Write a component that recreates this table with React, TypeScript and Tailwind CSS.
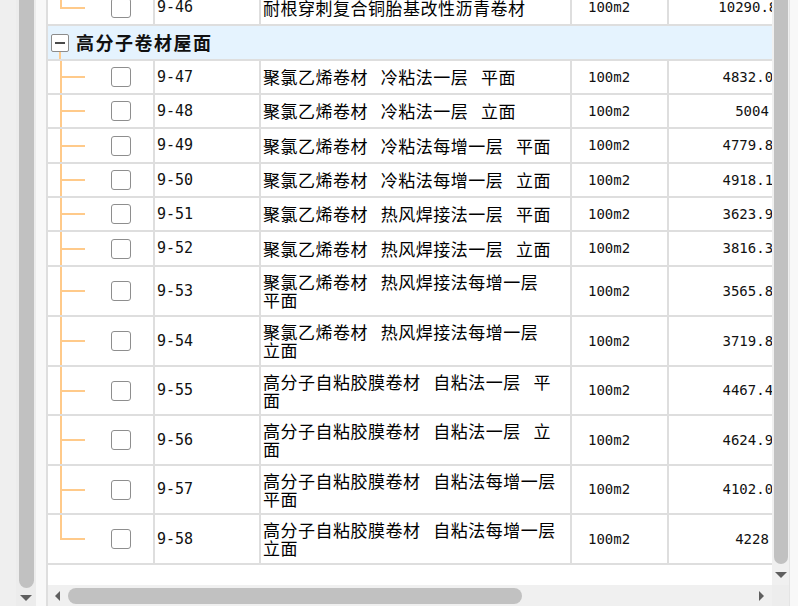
import React from 'react';

type Item = { code: string; name: string; price: string; h: number; last?: boolean };

// heights are the row pitch in the screenshot (border included)
const items: Item[] = [
  { code: '9-47', name: '聚氯乙烯卷材 冷粘法一层 平面', price: '4832.06', h: 34 },
  { code: '9-48', name: '聚氯乙烯卷材 冷粘法一层 立面', price: '5004', h: 34 },
  { code: '9-49', name: '聚氯乙烯卷材 冷粘法每增一层 平面', price: '4779.82', h: 35 },
  { code: '9-50', name: '聚氯乙烯卷材 冷粘法每增一层 立面', price: '4918.14', h: 34 },
  { code: '9-51', name: '聚氯乙烯卷材 热风焊接法一层 平面', price: '3623.95', h: 34 },
  { code: '9-52', name: '聚氯乙烯卷材 热风焊接法一层 立面', price: '3816.37', h: 35 },
  { code: '9-53', name: '聚氯乙烯卷材 热风焊接法每增一层 平面', price: '3565.84', h: 50 },
  { code: '9-54', name: '聚氯乙烯卷材 热风焊接法每增一层 立面', price: '3719.82', h: 50 },
  { code: '9-55', name: '高分子自粘胶膜卷材 自粘法一层 平面', price: '4467.45', h: 49 },
  { code: '9-56', name: '高分子自粘胶膜卷材 自粘法一层 立面', price: '4624.95', h: 50 },
  { code: '9-57', name: '高分子自粘胶膜卷材 自粘法每增一层 平面', price: '4102.06', h: 49 },
  { code: '9-58', name: '高分子自粘胶膜卷材 自粘法每增一层 立面', price: '4228', h: 50, last: true },
];

const cjk = "font-['Noto_Sans_CJK_SC',sans-serif]";
const mono = "font-['DejaVu_Sans_Mono','Noto_Sans_CJK_SC',monospace]";

function Branch({ last }: { last?: boolean }) {
  return (
    <div className="flex h-full shrink-0">
      <div className="w-[12px]" />
      <div className="flex w-[25px] flex-col">
        <div className="flex-1 border-l-2 border-[#ffca8a]" />
        <div className={'flex-1 border-t-2 border-[#ffca8a] ' + (last ? '' : 'border-l-2')} />
      </div>
    </div>
  );
}

function Row({ item }: { item: Item }) {
  return (
    <div
      className="flex shrink-0 border-b-2 border-[#dedede] text-black"
      style={{ height: item.h }}
    >
      <div className="flex w-[107px] shrink-0 items-center border-r-2 border-[#dedede]">
        <Branch last={item.last} />
        <div className="ml-[26px] h-[20px] w-[20px] rounded-[3px] border-[1.5px] border-[#8e8e8e] bg-white" />
      </div>
      <div className={'flex w-[106px] shrink-0 items-center border-r-2 border-[#dedede] pl-[2px] text-[15px] text-[#111] ' + mono}>
        {item.code}
      </div>
      <div className={'flex w-[311px] shrink-0 items-center border-r-2 border-[#dedede] pl-[2px] pr-[9px] text-[17px] leading-[18px] tracking-[0.5px] [word-spacing:8.5px] ' + cjk}>
        {item.name}
      </div>
      <div className={'flex w-[97px] shrink-0 items-center border-r-2 border-[#dedede] pl-[16px] text-[14px] text-[#111] ' + mono}>
        100m2
      </div>
      <div className={'flex w-[166px] shrink-0 items-center justify-center text-[14px] text-[#111] ' + mono}>
        {item.price}
      </div>
    </div>
  );
}

export default function App() {
  return (
    <div className="flex h-[606px] w-[798px] overflow-hidden bg-[#efefef]">
      <div className="w-[16px] shrink-0 bg-[#efefef]" />
      {/* outer scrollbar */}
      <div className="flex w-[20px] shrink-0 flex-col items-center bg-[#ececec]">
        <div className="w-[15px] flex-1 rounded-b-full bg-[#c1c1c1]" />
        <div className="mb-[5px] mt-[7px] h-0 w-0 border-l-[6px] border-r-[6px] border-t-[6px] border-l-transparent border-r-transparent border-t-[#5f5f5f]" />
      </div>
      <div className="w-[10px] shrink-0 bg-[#f8f8f8]" />

      <div className="flex w-[743px] shrink-0 flex-col border-l-2 border-[#dedede]">
        <div className="flex h-[585px] shrink-0">
          <div className="flex-1 overflow-hidden bg-white">
            <div className="-mt-[9px] flex w-[787px] flex-col">
              <Row item={{ code: '9-46', name: '耐根穿刺复合铜胎基改性沥青卷材', price: '10290.83', h: 35, last: true }} />
              <div className="flex h-[35px] shrink-0 border-b-2 border-[#dedede] bg-[#e5f3fe]">
                <div className="ml-[3px] flex w-[18px] flex-col">
                  <div className="flex-1" />
                  <div className="flex h-[18px] w-[18px] items-center justify-center rounded-[2px] border border-[#8c8c8c] bg-white">
                    <div className="h-[2px] w-[10px] bg-[#4a4a4a]" />
                  </div>
                  <div className="ml-[8px] w-[2px] flex-1 bg-[#ffca8a]" />
                </div>
                <div className={'ml-[7px] flex items-center text-[18px] font-bold tracking-[1.5px] text-[#111] ' + cjk}>
                  高分子卷材屋面
                </div>
              </div>
              {items.map((it) => (
                <Row key={it.code} item={it} />
              ))}
            </div>
          </div>
          {/* vertical scrollbar */}
          <div className="flex w-[17px] shrink-0 flex-col items-center bg-[#f0f0f0]">
            <div className="w-[14px] flex-1 rounded-b-full bg-[#c1c1c1]" />
            <div className="mb-[7px] mt-[8px] h-0 w-0 border-l-[6px] border-r-[6px] border-t-[6px] border-l-transparent border-r-transparent border-t-[#5f5f5f]" />
          </div>
        </div>
        <div className="flex h-[21px] shrink-0">
          <div className="flex flex-1 items-center bg-[#f0f0f0]">
            <div className="ml-[7px] h-0 w-0 border-b-[5px] border-r-[5px] border-t-[5px] border-b-transparent border-t-transparent border-r-[#5f5f5f]" />
            <div className="ml-[8px] h-[16px] w-[454px] rounded-full bg-[#c1c1c1]" />
            <div className="flex-1" />
            <div className="mr-[8px] h-0 w-0 border-b-[5px] border-l-[5px] border-t-[5px] border-b-transparent border-t-transparent border-l-[#5f5f5f]" />
          </div>
          <div className="w-[17px] shrink-0 bg-[#ededed]" />
        </div>
      </div>
      <div className="w-[9px] shrink-0 border-l border-[#e4e4e4] bg-[#f8f8f8]" />
    </div>
  );
}
